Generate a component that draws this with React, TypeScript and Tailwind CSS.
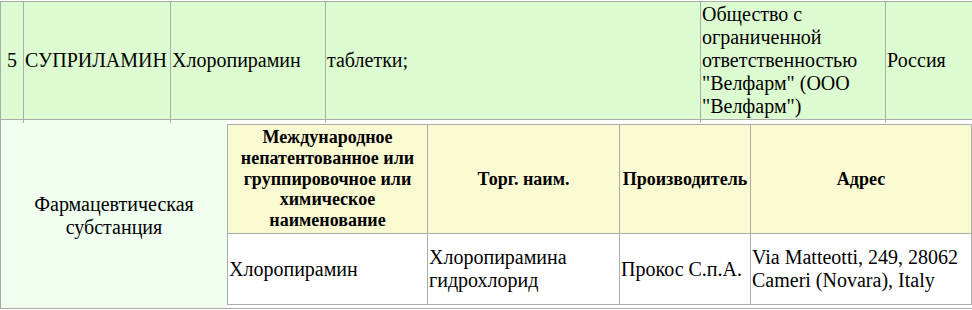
import React from 'react'

const line = 'border-[#a9aca9]'

const App: React.FC = () => {
    return (
        <div className="w-[972px] h-[310px] overflow-hidden bg-white pt-px [font-family:'Liberation_Serif','Times_New_Roman',serif] text-[20px] leading-[23px] text-black">
            {/* Drug row */}
            <div className={`flex w-max h-[119px] border-y ${line} bg-[#ddfbd0]`}>
                <div className={`flex w-[23px] shrink-0 items-center justify-center border-l ${line} p-px`}>
                    5
                </div>
                <div className={`flex w-[147px] shrink-0 items-center border-l ${line} p-px`}>
                    СУПРИЛАМИН
                </div>
                <div className={`flex w-[155px] shrink-0 items-center border-l ${line} p-px`}>
                    Хлоропирамин
                </div>
                <div className={`flex w-[375px] shrink-0 items-center border-l ${line} p-px`}>
                    таблетки;
                </div>
                <div className={`flex w-[185px] shrink-0 items-center border-l ${line} p-px`}>
                    Общество с ограниченной ответственностью "Велфарм" (ООО "Велфарм")
                </div>
                <div className={`flex w-[120px] shrink-0 items-center border-x ${line} p-px`}>
                    Россия
                </div>
            </div>

            {/* Substance row */}
            <div className={`flex w-max h-[189px] border-b border-l ${line}`}>
                <div className="flex w-[226px] shrink-0 flex-col bg-[#f0fff0]">
                    <div className="flex h-[3px]">
                        <div className="w-[22px]" />
                        <div className={`w-[147px] border-l ${line}`} />
                        <div className={`flex-1 border-l ${line}`} />
                    </div>
                    <div className="flex flex-1 items-center justify-center px-px text-center">
                        Фармацевтическая субстанция
                    </div>
                </div>

                <div className="flex shrink-0 flex-col bg-white pb-[3px]">
                    <div className="flex h-[3px]">
                        <div className="w-[98px]" />
                        <div className={`w-[375px] border-l ${line}`} />
                        <div className={`w-[185px] border-l ${line}`} />
                        <div className={`w-[90px] border-l ${line}`} />
                    </div>
                    <div className={`mt-px flex flex-col border-t ${line}`}>
                        <div className={`flex h-[109px] border-b ${line} bg-[#fafad2] text-[18px] leading-[20.7px] font-bold`}>
                            <div className={`flex w-[200px] shrink-0 items-center justify-center border-l ${line} p-px text-center`}>
                                Международное непатентованное или группировочное или химическое наименование
                            </div>
                            <div className={`flex w-[192px] shrink-0 items-center justify-center border-l ${line} p-px text-center`}>
                                Торг. наим.
                            </div>
                            <div className={`flex w-[131px] shrink-0 items-center justify-center border-l ${line} p-px text-center`}>
                                Производитель
                            </div>
                            <div className={`flex w-[222px] shrink-0 items-center justify-center border-x ${line} p-px text-center`}>
                                Адрес
                            </div>
                        </div>
                        <div className={`flex h-[71px] border-b ${line}`}>
                            <div className={`flex w-[200px] shrink-0 items-center border-l ${line} p-px`}>
                                Хлоропирамин
                            </div>
                            <div className={`flex w-[192px] shrink-0 items-center border-l ${line} p-px`}>
                                Хлоропирамина гидрохлорид
                            </div>
                            <div className={`flex w-[131px] shrink-0 items-center border-l ${line} p-px`}>
                                Прокос С.п.А.
                            </div>
                            <div className={`flex w-[222px] shrink-0 items-center border-x ${line} p-px`}>
                                Via Matteotti, 249, 28062 Cameri (Novara), Italy
                            </div>
                        </div>
                    </div>
                </div>
            </div>
        </div>
    )
}

export default App
